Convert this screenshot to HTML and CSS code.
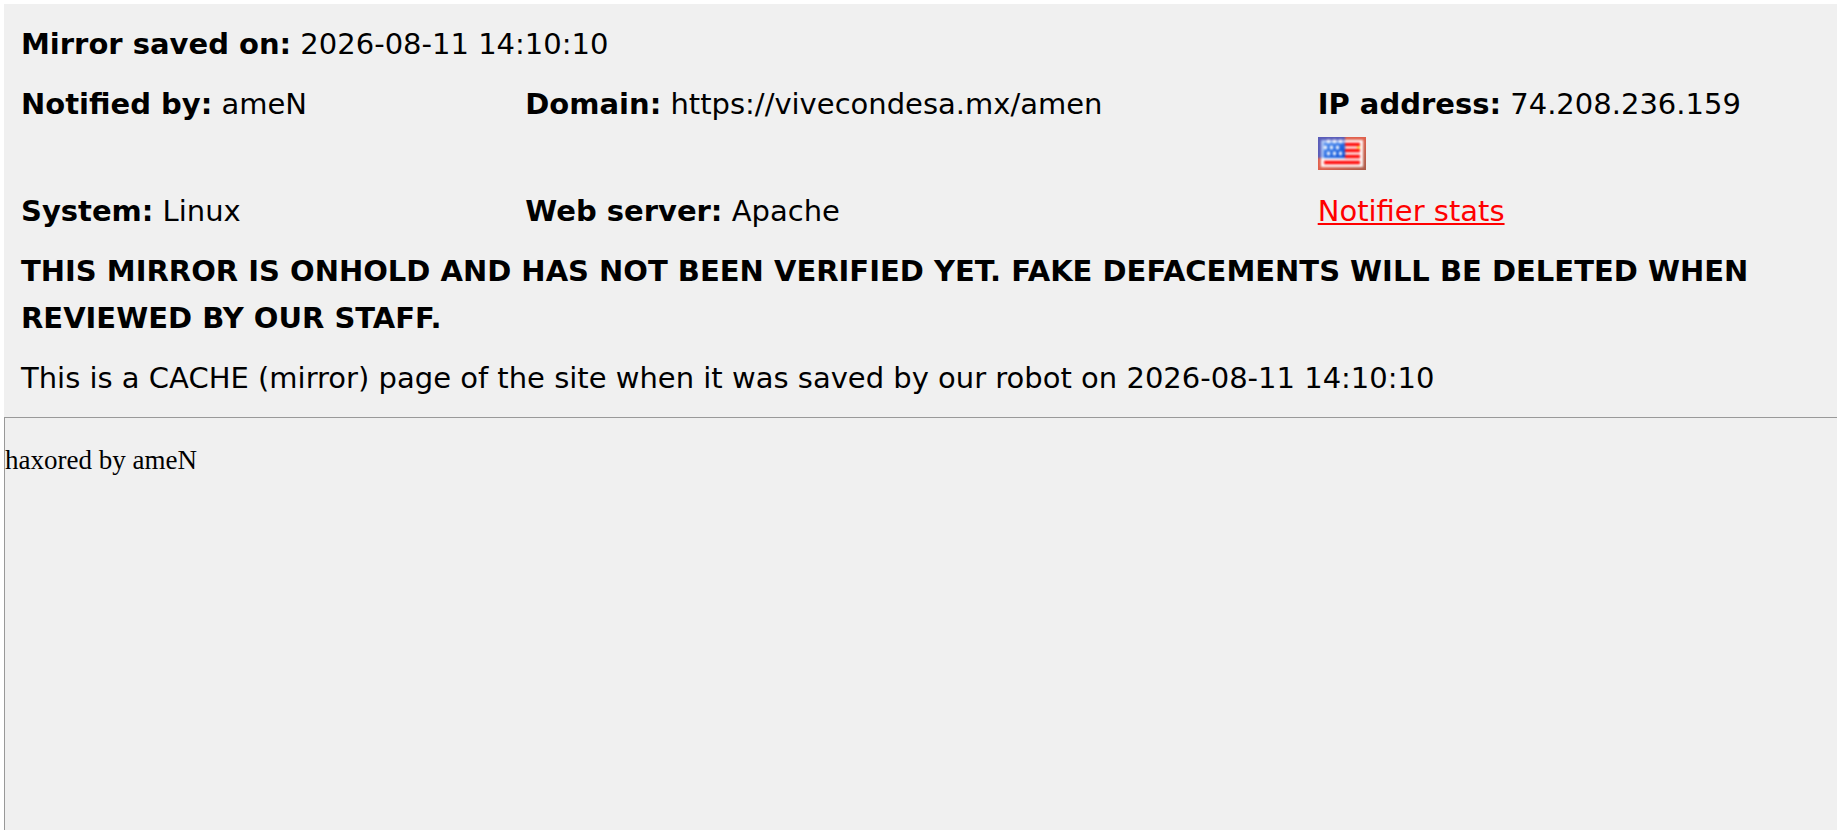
FILE: index.html
```html
<!DOCTYPE html>
<html lang="en">
<head>
    <meta charset="UTF-8">
    <meta name="viewport" content="width=device-width, initial-scale=1.0">
    <title>Mirror saved on 2026-08-11 14:10:10</title>
    <link rel="stylesheet" href="styles.css">
</head>
<body>
    <div class="mirror-info">
        <p><strong>Mirror saved on:</strong> 2026-08-11 14:10:10</p>

        <div class="details">
            <div><strong>Notified by:</strong> ameN</div>
            <div><strong>Domain:</strong> https://vivecondesa.mx/amen</div>
            <div>
                <strong>IP address:</strong> 74.208.236.159
                <div class="country">
                    <svg class="flag" viewBox="0 0 16 11" role="img" aria-label="United States">
                        <defs>
                            <linearGradient id="canton" x1="0" y1="0" x2="1" y2="1">
                                <stop offset="0" stop-color="#5a98f4"/>
                                <stop offset="1" stop-color="#0048d4"/>
                            </linearGradient>
                            <linearGradient id="edge" x1="0" y1="0" x2="1" y2="1">
                                <stop offset="0.5" stop-color="#e0604c"/>
                                <stop offset="1" stop-color="#a05a48"/>
                            </linearGradient>
                            <filter id="soft" x="-0.1" y="-0.1" width="1.2" height="1.2" color-interpolation-filters="sRGB">
                                <feGaussianBlur stdDeviation="0.3"/>
                            </filter>
                        </defs>
                        <rect width="16" height="11" fill="url(#edge)"/>
                        <g filter="url(#soft)">
                            <rect x="-1" y="-1" width="18" height="13" fill="url(#edge)"/>
                            <rect x="1" y="1" width="14" height="9" fill="#fff"/>
                            <path d="M9 2.5h5M9 4.5h5M9 6.5h5M2 8.5h12" stroke="#ff0000" stroke-width="1.1"/>
                            <rect x="-1" y="-1" width="10" height="8" fill="#5a5cb8"/>
                            <rect x="1" y="1" width="8" height="6" fill="url(#canton)"/>
                            <path d="M1.5 7V1.5H9" fill="none" stroke="#b8ccf6" stroke-width="0.8"/>
                            <path d="M3 1.5h1M5 1.5h1M7 1.5h1M2 3.5h1M4 3.5h1M6 3.5h1M3 5.5h1M5 5.5h1M7 5.5h1" stroke="#fff" stroke-width="1.1"/>
                            <rect x="13" y="3" width="1" height="1" fill="#ffd43c"/>
                        </g>
                    </svg>
                </div>
            </div>
            <div><strong>System:</strong> Linux</div>
            <div><strong>Web server:</strong> Apache</div>
            <div><a href="#">Notifier stats</a></div>
        </div>

        <p><strong>THIS MIRROR IS ONHOLD AND HAS NOT BEEN VERIFIED YET. FAKE DEFACEMENTS WILL BE DELETED WHEN REVIEWED BY OUR STAFF.</strong></p>
        <p>This is a CACHE (mirror) page of the site when it was saved by our robot on 2026-08-11 14:10:10</p>
    </div>

    <div class="mirror-page">
        <p>haxored by ameN</p>
    </div>
</body>
</html>
```
FILE: styles.css
```css
* {
    box-sizing: border-box;
}
body {
    margin: 0;
    padding: 4px 0 0 4px;
    min-height: 100vh;
    display: flex;
    flex-direction: column;
    background-color: #fff;
    color: #000;
}

/* Header with the mirror details */
.mirror-info {
    display: flex;
    flex-direction: column;
    gap: 13px;
    padding: 17px 15px 15px 17px;
    background-color: #f0f0f0;
    font-family: Verdana, "DejaVu Sans", sans-serif;
    font-size: 29px;
    line-height: 47px;
}
.mirror-info p {
    margin: 0;
}
.details {
    display: grid;
    grid-template-columns: 28% 44% 28%;
    row-gap: 13px;
}
.mirror-info a {
    color: #f00;
}
.country {
    display: flex;
    align-items: flex-end;
    height: 47px;
    padding-bottom: 5px;
}
.flag {
    width: 48px;
    height: 33px;
}

/* Saved copy of the page */
.mirror-page {
    flex-grow: 1;
    border: solid #999;
    border-width: 1px 0 0 1px;
    background-color: #f0f0f0;
    font-family: "Times New Roman", "Liberation Serif", serif;
    font-size: 27px;
}
.mirror-page p {
    margin: 27px 0;
}
```
